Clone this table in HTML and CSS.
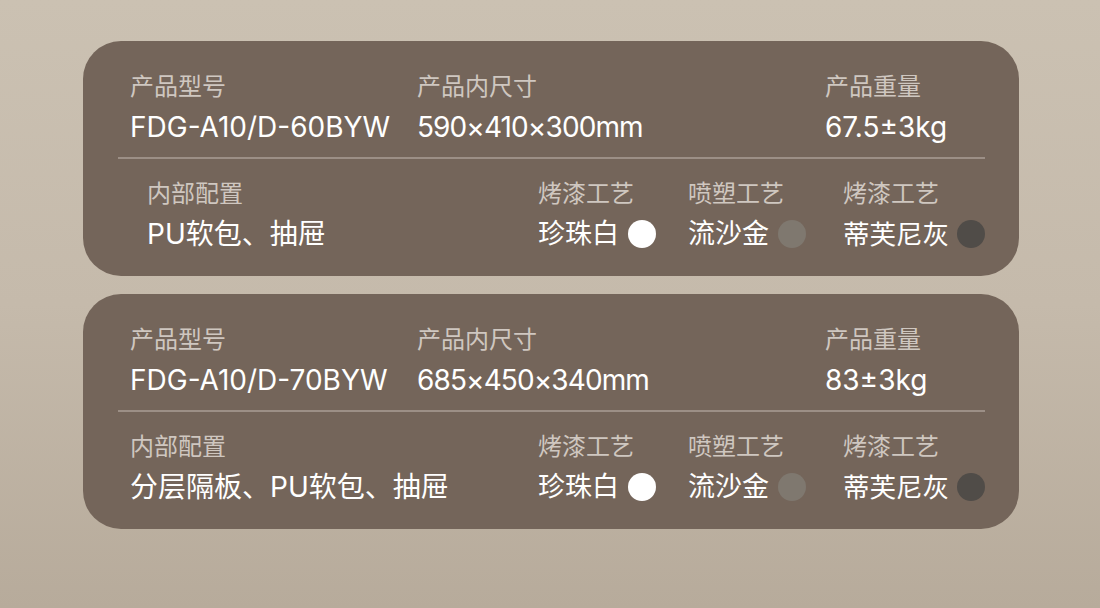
FILE: index.html
```html
<!DOCTYPE html>
<html lang="zh">
<head>
<meta charset="utf-8">
<link rel="stylesheet" href="styles.css">
</head>
<body>
<main class="page">
  <section class="card">
    <div class="top">
      <div class="field f-model"><div class="label">产品型号</div><div class="value">FDG-A10/D-60BYW</div></div>
      <div class="field f-size"><div class="label">产品内尺寸</div><div class="value">590×410×300mm</div></div>
      <div class="field f-weight"><div class="label">产品重量</div><div class="value">67.5±3kg</div></div>
    </div>
    <div class="divider"></div>
    <div class="bottom">
      <div class="field f-config indent"><div class="label">内部配置</div><div class="value">PU软包、抽屉</div></div>
      <div class="field color c1"><div class="label">烤漆工艺</div><div class="value">珍珠白<span class="dot white"></span></div></div>
      <div class="field color c2"><div class="label">喷塑工艺</div><div class="value">流沙金<span class="dot gold"></span></div></div>
      <div class="field color c3"><div class="label">烤漆工艺</div><div class="value">蒂芙尼灰<span class="dot grey"></span></div></div>
    </div>
  </section>
  <section class="card">
    <div class="top">
      <div class="field f-model"><div class="label">产品型号</div><div class="value">FDG-A10/D-70BYW</div></div>
      <div class="field f-size"><div class="label">产品内尺寸</div><div class="value">685×450×340mm</div></div>
      <div class="field f-weight"><div class="label">产品重量</div><div class="value">83±3kg</div></div>
    </div>
    <div class="divider"></div>
    <div class="bottom">
      <div class="field f-config"><div class="label">内部配置</div><div class="value">分层隔板、PU软包、抽屉</div></div>
      <div class="field color c1"><div class="label">烤漆工艺</div><div class="value">珍珠白<span class="dot white"></span></div></div>
      <div class="field color c2"><div class="label">喷塑工艺</div><div class="value">流沙金<span class="dot gold"></span></div></div>
      <div class="field color c3"><div class="label">烤漆工艺</div><div class="value">蒂芙尼灰<span class="dot grey"></span></div></div>
    </div>
  </section>
</main>
</body>
</html>
```

FILE: styles.css
```css
html, body {
  margin: 0;
  padding: 0;
}
body {
  width: 1100px;
  height: 608px;
  overflow: hidden;
  background: linear-gradient(180deg, #cbc1b2 0%, #c5baab 50%, #b7ab9b 100%);
  font-family: "Noto Sans CJK SC", "Noto Sans", sans-serif;
}
.page {
  padding: 41px 81px 0 83px;
  display: flex;
  flex-direction: column;
  gap: 18px;
}
.card {
  width: 936px;
  height: 235px;
  box-sizing: border-box;
  background: #74655a;
  border-radius: 38px;
  padding: 28px 34px 0 35px;
}
.top {
  display: flex;
  padding-left: 12px;
}
.field .label {
  font-size: 24px;
  line-height: 32px;
  color: #cfc7c0;
  white-space: nowrap;
}
.field .value {
  font-family: "Inter", "Noto Sans CJK SC", sans-serif;
  font-size: 28px;
  line-height: 36px;
  color: #ffffff;
  margin-top: 8px;
  display: flex;
  align-items: center;
  white-space: nowrap;
}
.f-model { width: 287px; }
.f-size { width: 408px; }
.f-size .value { letter-spacing: -0.9px; }
.divider {
  height: 2px;
  background: #9c8f86;
  margin-top: 12px;
}
.bottom {
  display: flex;
  margin-top: 17px;
  padding-left: 12px;
}
.f-config { flex: 1; }
.f-config.indent { padding-left: 17px; }
.color .value {
  font-size: 27px;
  justify-content: space-between;
}
.color.c1 { width: 118px; }
.color.c2 { width: 118px; margin-left: 32px; }
.color.c3 { width: 142px; margin-left: 37px; }
.color.c3 .value { font-size: 26.5px; }
.dot {
  width: 28px;
  height: 28px;
  border-radius: 50%;
  flex: none;
}
.dot.white { background: #ffffff; }
.dot.gold { background: #7f786f; }
.dot.grey { background: #504c48; }
```
